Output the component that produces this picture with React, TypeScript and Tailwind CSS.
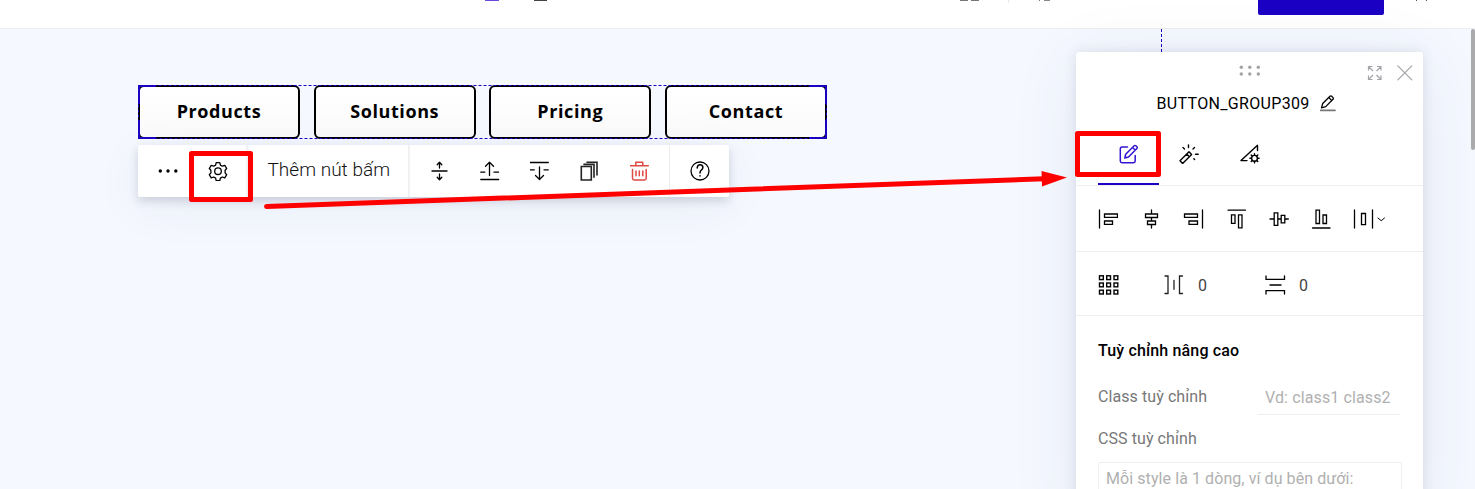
import React from "react";

type IconProps = { children: React.ReactNode; w?: number; h?: number; vb?: string; className?: string; sw?: number };

function Icon({ children, w = 20, h = 20, vb, className = "", sw = 1.3 }: IconProps) {
  return (
    <svg
      width={w}
      height={h}
      viewBox={vb ?? `0 0 ${w} ${h}`}
      fill="none"
      stroke="currentColor"
      strokeWidth={sw}
      strokeLinecap="round"
      strokeLinejoin="round"
      className={`block shrink-0 ${className}`}
    >
      {children}
    </svg>
  );
}

const gearPath =
  "M8.200 1h3.600l.6 2.500 1.900 1.100 2.500-.8 1.900 3.100-1.600 1.800v2.600l1.600 1.800-1.900 3.100-2.500-.8-1.900 1.100-.6 2.500H8.200l-.6-2.500-1.900-1.100-2.500.8-1.900-3.100 1.600-1.800V8.700L1.300 6.900l1.900-3.100 2.500.8 1.900-1.100z";

function Toolbar() {
  return (
    <div className="absolute left-[138px] top-[116px] flex h-[52px] w-[591px] rounded-[2px] bg-white shadow-[0_4px_10px_rgba(40,50,80,0.18),0_10px_50px_rgba(40,50,80,0.06)]">
      <div className="flex w-[110px] shrink-0 items-center border-r-2 border-[#f1f1f4] pl-5">
        <Icon>
          <g fill="currentColor" stroke="none">
            <circle cx="2.300" cy="10" r="1.700" />
            <circle cx="10" cy="10" r="1.700" />
            <circle cx="17.800" cy="10" r="1.700" />
          </g>
        </Icon>
        <Icon className="ml-[30px]">
          <path d={gearPath} transform="translate(0 .6)" />
          <circle cx="10" cy="10.200" r="3.300" />
        </Icon>
      </div>
      <div className="flex w-[162px] shrink-0 items-center border-r-2 border-[#f1f1f4] pb-[1px] pl-[19.500px] text-[19px] font-light tracking-[0.02px] whitespace-nowrap text-[#111]">
        Thêm nút bấm
      </div>
      <div className="flex w-[260px] shrink-0 items-center gap-[30px] border-r border-[#ededf1] pl-[20px]">
        <Icon>
          <path d="M2 10h15M9.500 1.500v5.500M9.500 13v5.500M7.200 3.800l2.300-2.500 2.300 2.500M7.200 16.200l2.300 2.500 2.300-2.500" />
        </Icon>
        <Icon>
          <path d="M.8 18.500h17.800M.8 11.200h4M14 11.200h4.500M9.500 14.500V1.500M5.500 5.300l4-4 4 4" />
        </Icon>
        <Icon>
          <path d="M0 1.500h18.300M0 8.800h4.300M14 8.800h4.300M9.500 6V18M5.500 14.500l4 4 4-4" />
        </Icon>
        <Icon className="text-[#222]">
          <path d="M1.300 5.500h10v13.500h-10zM4 3.400h10V16.200M7 1.200h10V14" strokeWidth="1.600" strokeLinejoin="miter" />
        </Icon>
        <Icon className="text-[#e04a43]" sw={1.500}>
          <path d="M.3 4.700h18M5.800 4.400V1.300h7v3.100M2.500 8.500v8.700q0 1.700 1.700 1.700h10.300q1.700 0 1.700-1.700V8.500M6 10v4.700M9.300 10v4.700M12.800 10v4.700" />
        </Icon>
      </div>
      <div className="flex flex-1 items-center justify-center">
        <Icon>
          <circle cx="10" cy="10" r="9" />
          <path d="M7.200 7q.2-3.200 2.900-3.200 2.800 0 2.800 2.800 0 1.500-1.600 2.600-1.300.9-1.300 2.700M10 14.800v.3" strokeWidth="1.500" />
        </Icon>
      </div>
    </div>
  );
}

function AlignIcons() {
  return (
    <div className="flex h-[66px] items-center border-b border-[#efeff1] pl-[22px] text-black">
      <Icon className="mr-[23px]">
        <path d="M1.500 1v18M6.500 5h13v3.300h-13zM6.500 12h8v3.300h-8z" strokeLinejoin="miter" />
      </Icon>
      <Icon className="mr-[22px]">
        <path d="M10.500 1v4M10.500 8.500V12M10.500 15.500V19M4.500 5h12v3.500h-12zM6.500 12h8v3.500h-8z" strokeLinejoin="miter" />
      </Icon>
      <Icon className="mr-[23px]" w={21}>
        <path d="M19.500 1v18M1.500 5h13v3.300h-13zM6 12h8.500v3.300H6z" strokeLinejoin="miter" />
      </Icon>
      <Icon className="mr-[22px]">
        <path d="M1 1.200h17.500M4.500 5.800H8v8.500H4.500zM11.500 5.800H15v13h-3.500z" strokeLinejoin="miter" />
      </Icon>
      <Icon className="mr-[22px]">
        <path d="M1 10h4M9 10h3M16 10h3.300M5.200 3.800h3.600v12.500H5.200zM12.200 6.300h3.600v7.500h-3.600z" strokeLinejoin="miter" />
      </Icon>
      <Icon className="mr-[22px]">
        <path d="M1.500 19H19M5 1.200h3.500v13.300H5zM12 6h3.500v8.500H12z" strokeLinejoin="miter" />
      </Icon>
      <Icon w={34} h={20}>
        <path d="M1.500 1v18M19.500 1v18M8.500 4.500h4v11.200h-4z" strokeLinejoin="miter" />
        <path d="M25 9l3.200 2.700L31.500 9" strokeWidth="1" />
      </Icon>
    </div>
  );
}

function Panel() {
  return (
    <div className="absolute left-[1076px] top-[23px] flex h-[470px] w-[347px] flex-col rounded-t-[3px] bg-white shadow-[0_0_12px_rgba(50,60,100,0.13),0_10px_70px_rgba(50,60,110,0.08)]">
      <div className="flex h-[36px] items-center justify-end pt-[5px] pr-[10px] text-[#a3a3a8]">
        <Icon w={22} h={12} className="mr-[106px] mb-[3px]">
          <g fill="currentColor" stroke="none">
            {[2.300, 10.800, 19.300].map((x) =>
              [2.300, 9].map((y) => <circle key={`${x}-${y}`} cx={x} cy={y} r="1.700" />)
            )}
          </g>
        </Icon>
        <Icon w={16} h={16} sw={1.200} className="mr-[14px]">
          <path
            d="M5.500 1.500H1.500V5.500M10 1.500h4V5.500M1.500 10.500v4H5.500M14 10.500v4h-4M1.500 1.500L6 6M14 1.500L9.500 6M1.500 14.500L6 10M14 14.500L9.500 10"
            strokeLinecap="butt"
            strokeLinejoin="miter"
          />
        </Icon>
        <Icon w={16} h={16} sw={1.200}>
          <path d="M.8 .8l14 14M14.800 .8L.8 14.800" />
        </Icon>
      </div>
      <div className="flex h-[30px] items-center pt-[1px] pl-[80.500px] text-[16px] text-black">
        <span className="w-[153px] tracking-[0.33px] whitespace-nowrap">BUTTON_GROUP309</span>
        <Icon w={16} h={17} className="ml-[10px]" sw={1.300}>
          <path d="M1.500 12.800l1.200-4.300 7.300-7.200a1.200 1.200 0 0 1 1.700 0l1.300 1.300a1.200 1.200 0 0 1 0 1.700l-7.300 7.300zM9 2.700l2.700 2.700" />
          <path d="M.5 15.300h14.500" stroke="#777" strokeWidth="1.700" />
        </Icon>
      </div>
      <div className="flex h-[68px] border-b border-[#efeff1] pl-[22px] text-black">
        <div className="flex w-[61px] items-center justify-center border-b-2 border-[#1b00c3] pt-[6px] text-[#3214d2]">
          <Icon sw={1.500}>
            <path d="M8.500 3H3Q1.300 3 1.300 4.700v12.300q0 1.700 1.700 1.700h11.500q1.700 0 1.700-1.700v-5.500" />
            <path d="M5.800 14l.9-3.700 8.500-8.500a1.200 1.200 0 0 1 1.700 0l1 1a1.200 1.200 0 0 1 0 1.700L9.500 13zM13.500 3.500L16.200 6" />
          </Icon>
        </div>
        <div className="flex w-[61px] items-center justify-center pt-[4px] pr-px">
          <Icon sw={1.400}>
            <path d="M1 16.800L10 7.800l2.600 2.600-9 9zM7.700 10.100l2.600 2.600" />
            <path d="M9.500 1v2.500M4 3.500l1.500 1.500M15.500 3.500L14 5M16.500 10.300h2.700M14.800 14.800l.8.800" />
          </Icon>
        </div>
        <div className="flex w-[61px] items-center justify-center pt-[4px] pr-[2px]">
          <Icon sw={1.400}>
            <path d="M17.500 6.500V1.300L1 16.600h6" />
            <circle cx="14.500" cy="14.300" r="2.900" />
            <path d="M14.500 9.700v1.400M14.500 17.500v1.400M9.900 14.300h1.400M17.700 14.300h1.400M11.200 11l1 1M16.800 16.600l1 1M17.800 11l-1 1M11.200 17.600l1-1" />
          </Icon>
        </div>
      </div>
      <AlignIcons />
      <div className="flex h-[64px] items-center border-b border-[#efeff1] pt-[4px] pl-[22px] text-[16px] text-[#444]">
        <Icon w={22} className="-mt-px text-black" sw={1.400}>
          {[1.500, 8.700, 16].map((x) =>
            [.8, 8, 15.200].map((y) => <rect key={`${x}-${y}`} x={x} y={y} width="3.800" height="3.800" strokeLinejoin="miter" />)
          )}
        </Icon>
        <Icon className="-mt-px ml-[44px] text-[#222]">
          <path d="M1 1h3v17.500H1M18.500 1h-3v17.500h3M10 5.500v8.800" strokeLinejoin="miter" />
        </Icon>
        <span className="ml-[14px] w-[11px]">0</span>
        <Icon w={22} className="-mt-px ml-[55px] text-black">
          <path d="M2 1v3.300h18.500V1M2 19v-3.300h18.500V19M6 10h11" strokeLinejoin="miter" />
        </Icon>
        <span className="ml-[13px]">0</span>
      </div>
      <div className="flex flex-col px-[22px] text-[16px] tracking-[0.08px]">
        <h2 className="mt-[23px] h-6 leading-6 font-medium tracking-[0.15px] text-black">Tuỳ chỉnh nâng cao</h2>
        <div className="mt-[14px] flex h-[38px] justify-between">
          <span className="pt-2 leading-6 text-[#777]">Class tuỳ chỉnh</span>
          <span className="mr-[1px] w-[142px] border-b border-[#efeff1] pt-[9px] pl-[7px] leading-6 tracking-[0.12px] text-[#b0b0b0]">
            Vd: class1 class2
          </span>
        </div>
        <span className="mt-[12px] leading-6 text-[#777]">CSS tuỳ chỉnh</span>
        <div className="mt-[11px] h-[60px] w-[304px] rounded-[2px] border border-[#efeff1] pt-[4px] pl-[7px] leading-6 text-[#b0b0b0]">
          Mỗi style là 1 dòng, ví dụ bên dưới:
        </div>
      </div>
    </div>
  );
}

function ButtonGroup() {
  return (
    <div className="relative ml-[138px] mt-[56px] flex h-[54px] w-[689px] justify-between">
      {["Products", "Solutions", "Pricing", "Contact"].map((label) => (
        <div
          key={label}
          className="flex w-[162px] items-center justify-center rounded-[6px] border-2 border-black bg-linear-to-b from-white to-[#fafafa] pb-[2px] font-['Open_Sans',sans-serif] text-[18px] font-bold tracking-[0.6px] text-black"
        >
          {label}
        </div>
      ))}
      <svg className="pointer-events-none absolute inset-0" width="689" height="54" fill="none" stroke="#1b00c3">
        <rect x=".5" y=".5" width="688" height="53" strokeDasharray="3 2" />
        <path d="M18 1H1v18M1 35v18h17M671 1h17v18M688 35v18h-17" strokeWidth="2" />
      </svg>
    </div>
  );
}

export default function App() {
  return (
    <div className="relative flex h-[489px] w-[1475px] flex-col overflow-hidden bg-[#f5f8ff] font-[Roboto,sans-serif]">
      <header className="flex h-[29px] shrink-0 items-start border-b border-[#eeeeef] bg-white">
        <div className="ml-[485px] h-px w-[14px] bg-[#6846db]" />
        <div className="ml-[35px] h-px w-[13px] bg-[#444]" />
        <div className="ml-[413px] h-px w-[8px] bg-[#777]" />
        <div className="ml-[3px] h-px w-[8px] bg-[#777]" />
        <div className="ml-[29px] h-[3px] w-px bg-[#e8e8e8]" />
        <div className="ml-[30px] h-px w-px bg-[#777]" />
        <div className="ml-[4px] h-px w-[6px] bg-[#888]" />
        <div className="ml-[208px] h-[15px] w-[126px] rounded-b-[2px] bg-[#1b00c3]" />
        <div className="ml-[32px] h-px w-px bg-[#555]" />
        <div className="ml-[9px] h-px w-px bg-[#555]" />
      </header>
      <main className="relative flex flex-1 flex-col">
        <ButtonGroup />
        <Toolbar />
        <svg className="absolute left-[1161px] top-0" width="1" height="23">
          <path d="M.5 0v23" stroke="#1b00c3" strokeDasharray="3 2" />
        </svg>
        <Panel />
        <div className="absolute top-0 right-0 h-[121px] w-[4px] rounded-[2px] bg-[#aaaaad]" />
      </main>
      <svg className="pointer-events-none absolute inset-0" width="1475" height="489" fill="none" stroke="#ff0000">
        <rect x="191.500" y="153.500" width="59" height="46" strokeWidth="5" strokeLinejoin="round" />
        <rect x="1077.500" y="133.500" width="81" height="41" strokeWidth="5" strokeLinejoin="round" />
        <path d="M266.500 206.500L1044 178.800" strokeWidth="5" strokeLinecap="round" />
        <path d="M1041.500 171L1067 177.500L1042 186.500z" fill="#ff0000" stroke="none" />
      </svg>
    </div>
  );
}
